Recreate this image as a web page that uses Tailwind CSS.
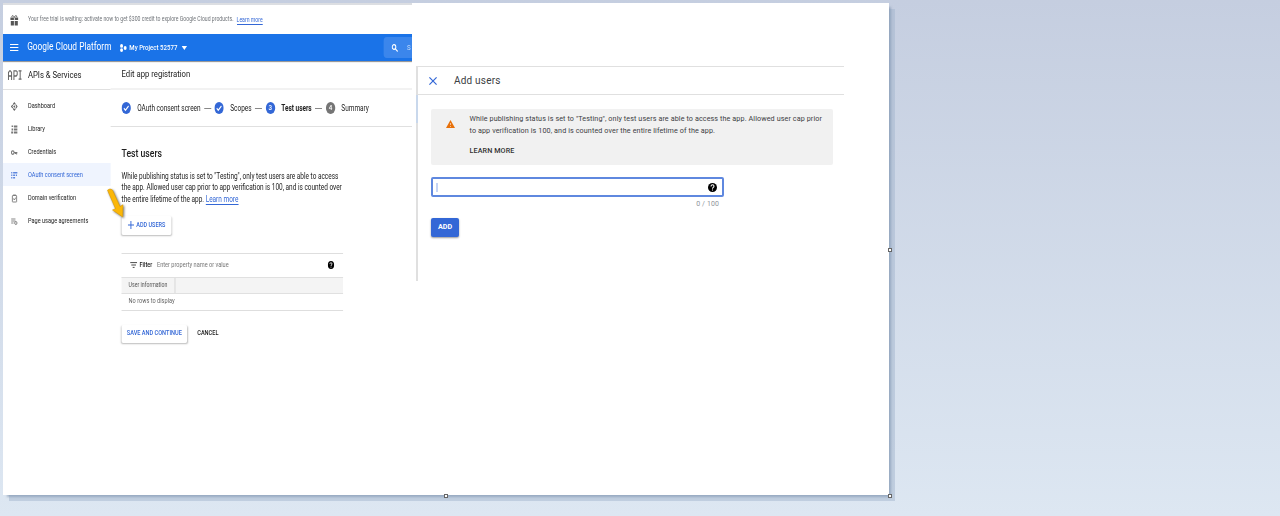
<!DOCTYPE html>
<html lang="en">
<head>
    <meta charset="UTF-8">
    <meta name="viewport" content="width=device-width, initial-scale=1.0">
    <title>OAuth consent screen - Test users</title>
    <script src="https://cdn.jsdelivr.net/npm/@tailwindcss/browser@4"></script>
</head>
<body class="h-[516px] overflow-hidden bg-linear-to-b from-[#c5cee0] to-[#dde7f2] pt-[3px] pl-[3px] font-['Roboto',sans-serif] text-[#3c4043]">
    <div class="relative w-[886px] h-[492px] bg-white flex gap-1 shadow-[3px_3px_2px_-1px_#7f93ad99,6px_6px_0_0_#a3b5ce80]">

        <!-- console page, horizontally condensed -->
        <div class="w-[409px] h-full shrink-0 overflow-hidden">
            <div class="w-[525px] origin-top-left scale-x-[.78] whitespace-nowrap">
                <div class="h-[31px] border-t-2 border-[#dcdee2] flex items-center pt-px pl-[9px] text-[6.6px] text-[#6f7378]">
                    <svg class="w-[11px] h-[11px] mr-3" viewBox="0 0 22 22" fill="#555"><path d="M1 5h9v5H1zM12 5h9v5h-9zM2 12h8v9H2zM12 12h8v9h-8z"/><path d="M11 5C9 0 4 0 5 4M11 5c2-5 7-5 6-1" fill="none" stroke="#555" stroke-width="2"/></svg>
                    <span>Your free trial is waiting: activate now to get $300 credit to explore Google Cloud products.</span>
                    <a class="ml-1 text-[#3367d6] border-b border-[#3367d6] leading-[8px]">Learn more</a>
                </div>
                <div class="h-[27px] bg-[#1a73e8] text-white flex items-center pl-[9px] shadow-[0_1px_1px_#0006]">
                    <svg class="w-[11px] h-[9px] mr-[11px]" viewBox="0 0 11 9" stroke="#fff" stroke-width="1.2"><path d="M0 1.5h11M0 4.5h11M0 7.5h11"/></svg>
                    <span class="w-[119px] text-[10.7px]">Google Cloud Platform</span>
                    <svg class="w-[9px] h-2 mr-[3px]" viewBox="0 0 9 8" fill="#fff"><circle cx="2" cy="1.9" r="1.9"/><circle cx="2" cy="6.1" r="1.9"/><circle cx="6.6" cy="4" r="1.9"/></svg>
                    <span class="text-[7.8px] font-medium">My Project 52577</span>
                    <svg class="w-[7px] h-1 ml-[5px]" viewBox="0 0 7 4" fill="#fff"><path d="M0 0h7L3.500 4z"/></svg>
                    <div class="ml-auto w-[37px] h-[21px] rounded-l bg-[#3b86ec] flex items-center pl-2.5 text-[8px] text-[#c5dcfa]">
                        <svg class="w-[9px] h-2 shrink-0 mr-[11px]" viewBox="0 0 9 8" fill="none" stroke="#fff" stroke-width="1.3"><circle cx="3.300" cy="3" r="2.300"/><path d="M5 4.700L8 7.500"/></svg>
                        <span>S</span>
                    </div>
                </div>

                <div class="flex">
                    <nav class="w-[138px] shrink-0 text-[7.2px] text-[#212121]">
                        <div class="h-[29px] mb-1 border-b border-[#e0e0e0] flex items-center pl-1.5 text-[9.9px]">
                            <svg class="w-[18px] h-[10px] mr-2" viewBox="0 0 18 10" fill="none" stroke="#666" stroke-width="1.3"><path d="M1 10V2.500l1.500-1.700h1l1.500 1.700V10M1 6h4M8 10V.8h3l1.200 1v3L11 6H8M14 .8h4M14 9.200h4M16 1v8"/></svg>
                            APIs &amp; Services
                        </div>
                        <div class="h-[23px] flex items-center gap-3 pl-2.5 pt-px">
                            <svg class="w-[9px] h-[9px] mr-px" viewBox="0 0 18 18" fill="none" stroke="#666" stroke-width="2.500"><path d="M6 5l3-3 3 3M6 13l3 3 3-3M5 6L2 9l3 3M13 6l3 3-3 3"/><circle cx="9" cy="9" r="1"/></svg>
                            Dashboard
                        </div>
                        <div class="h-[23px] flex items-center gap-3 pl-2.5 pt-px">
                            <svg class="w-[9px] h-[9px] mr-px" viewBox="0 0 18 18" fill="#777"><path d="M2 1h4v3H2zM8 1h9v3H8zM8 5h9v2H8zM2 7h4v4H2zM8 8h9v3H8zM1 13h5v4H1zM8 13h9v4H8z"/></svg>
                            Library
                        </div>
                        <div class="h-[23px] flex items-center gap-3 pl-2.5 pt-px">
                            <svg class="w-[9px] h-[9px] mr-px" viewBox="0 0 18 18" fill="none" stroke="#777" stroke-width="2.500"><circle cx="5" cy="9" r="3.500"/><path d="M8 9h9M15 9v4M12 9v3"/></svg>
                            Credentials
                        </div>
                        <div class="h-[23px] flex items-center gap-3 pl-2.5 pt-px bg-[#eff4fe] text-[#3367d6]">
                            <svg class="w-[9px] h-[9px] mr-px" viewBox="0 0 18 18" fill="#5c85dd"><path d="M1 2h3v3H1zM6 2h11v3H6zM1 7h3v3H1zM6 7h5v3H6zM13 7h3v3h-3zM1 12h3v3H1zM6 12h5v3H6z"/></svg>
                            OAuth consent screen
                        </div>
                        <div class="h-[23px] flex items-center gap-3 pl-2.5 pt-px">
                            <svg class="w-[9px] h-[9px] mr-px" viewBox="0 0 18 18" fill="none" stroke="#777" stroke-width="2"><rect x="4" y="3" width="11" height="13" rx="1"/><path d="M6 2h7M7 9l2 3 4-5"/></svg>
                            Domain verification
                        </div>
                        <div class="h-[23px] flex items-center gap-3 pl-2.5 pt-px">
                            <svg class="w-[9px] h-[9px] mr-px" viewBox="0 0 18 18" fill="none" stroke="#777" stroke-width="2"><path d="M1 4h11M1 8h11M1 12h6"/><circle cx="13" cy="12" r="3"/></svg>
                            Page usage agreements
                        </div>
                    </nav>

                    <main class="flex-1 text-[8.3px] text-[#212121]">
                        <div class="h-[29px] border-b-2 border-[#f2f2f2] flex items-center pl-[14px] text-[9.9px]">Edit app registration</div>
                        <div class="h-[37px] border-b border-[#e0e0e0] flex items-center pl-[14px]">
                            <svg class="w-3 h-3 mr-2" viewBox="0 0 12 12"><circle cx="6" cy="6" r="6" fill="#3367d6"/><path d="M3 6.200l2 2 4-4.200" fill="none" stroke="#fff" stroke-width="1.300"/></svg>
                            <span>OAuth consent screen</span>
                            <span class="w-[9px] h-px mx-[4.500px] bg-[#888]"></span>
                            <svg class="w-3 h-3 mr-2" viewBox="0 0 12 12"><circle cx="6" cy="6" r="6" fill="#3367d6"/><path d="M3 6.200l2 2 4-4.200" fill="none" stroke="#fff" stroke-width="1.300"/></svg>
                            <span>Scopes</span>
                            <span class="w-[9px] h-px mx-[4.500px] bg-[#888]"></span>
                            <span class="w-3 h-3 mr-2 rounded-full bg-[#3367d6] text-white text-[8px] font-medium flex items-center justify-center">3</span>
                            <span class="font-bold">Test users</span>
                            <span class="w-[9px] h-px mx-[4.500px] bg-[#888]"></span>
                            <span class="w-3 h-3 mr-2 rounded-full bg-[#757575] text-white text-[8px] font-medium flex items-center justify-center">4</span>
                            <span>Summary</span>
                        </div>
                        <div class="w-[298px] pl-[14px] pt-5">
                            <h1 class="text-[11.1px] leading-[14px] font-medium">Test users</h1>
                            <p class="mt-[10px] leading-[11.3px]">While publishing status is set to "Testing", only test users are able to access<br>the app. Allowed user cap prior to app verification is 100, and is counted over<br>the entire lifetime of the app. <a class="text-[#3367d6] border-b border-[#3367d6]">Learn more</a></p>
                            <button class="mt-[11px] w-[64px] h-[19px] rounded-xs shadow-[0_1px_2px_#0004] flex items-center justify-center gap-[3px] text-[7.1px] font-medium text-[#3367d6]">
                                <svg class="w-2 h-2" viewBox="0 0 8 8" stroke="#3367d6" stroke-width="1.200"><path d="M4 0v8M0 4h8"/></svg>
                                ADD USERS
                            </button>
                            <div class="mt-[18px] text-[7.2px] border-t border-[#dedede]">
                                <div class="h-[23px] flex items-center pl-[11px] pr-[11px]">
                                    <svg class="w-[9px] h-[6px] mr-[3px]" viewBox="0 0 9 6" stroke="#333" stroke-width="1"><path d="M0 .6h9M1.500 3h6M3.300 5.400h2.400"/></svg>
                                    <span class="font-medium">Filter</span>
                                    <span class="ml-[6px] text-[#757575]">Enter property name or value</span>
                                    <svg class="ml-auto w-[9px] h-2" viewBox="0 0 8 8"><circle cx="4" cy="4" r="4"/><path d="M2.700 3.100C2.700 1 5.400 1.200 5.300 3 5.200 3.900 4 3.900 4 5M4 5.700v.9" fill="none" stroke="#fff" stroke-width=".9"/></svg>
                                </div>
                                <div class="h-[17px] bg-[#f4f4f4] border-y border-[#e0e0e0] flex text-[6.7px] text-[#555]">
                                    <span class="w-[69px] pl-[9px] border-r border-[#d0d0d0] flex items-center">User information</span>
                                </div>
                                <div class="h-[17px] border-b border-[#dedede] flex items-center pl-[9px] text-[#666]">No rows to display</div>
                            </div>
                            <div class="mt-[14px] flex items-center gap-[13px] text-[7.2px] font-medium">
                                <button class="w-[84px] h-[18px] rounded-xs shadow-[0_1px_2px_#0004] text-[#3367d6]">SAVE AND CONTINUE</button>
                                <span>CANCEL</span>
                            </div>
                        </div>
                    </main>
                </div>
            </div>
        </div>

        <!-- add users panel -->
        <section class="mt-[63px] w-[428px] h-[215px] border-t border-l-2 border-[#e0e0e0] whitespace-nowrap">
            <div class="h-[28px] border-b border-[#e0e0e0] flex items-center pl-[11px]">
                <svg class="w-2 h-2 mr-[17px]" viewBox="0 0 8 8" stroke="#3367d6" stroke-width="1.200"><path d="M.4.4l7.200 7.200M7.600.4L.4 7.600"/></svg>
                <span class="text-[10px] tracking-[.2px]">Add users</span>
            </div>
            <div class="mt-[14px] ml-[13px] w-[402px] h-[56px] rounded-xs bg-[#f1f1f1] flex pl-[15px] pt-1">
                <svg class="w-[9px] h-2 mt-[7px] mr-[14.500px]" viewBox="0 0 18 16"><path d="M9 0l9 16H0z" fill="#e8710a"/><path d="M9 6v4M9 12v2" stroke="#fbd9bd" stroke-width="1.500"/></svg>
                <div class="text-[7.2px] leading-[12px] tracking-[.1px]">
                    <p>While publishing status is set to "Testing", only test users are able to access the app. Allowed user cap prior<br>to app verification is 100, and is counted over the entire lifetime of the app.</p>
                    <p class="mt-[7.500px] font-medium text-[#333]">LEARN MORE</p>
                </div>
            </div>
            <div class="mt-[12px] ml-[13px] w-[293px] h-[20px] rounded-xs border-2 border-[#5f88df] flex items-center pl-[3px] pr-[5px]">
                <span class="w-[2px] h-[9px] bg-[#c5d4f5]"></span>
                <svg class="ml-auto w-[9px] h-[9px]" viewBox="0 0 8 8"><circle cx="4" cy="4" r="4"/><path d="M2.700 3.100C2.700 1 5.400 1.200 5.300 3 5.200 3.900 4 3.900 4 5M4 5.700v.9" fill="none" stroke="#fff" stroke-width=".9"/></svg>
            </div>
            <div class="ml-[13px] w-[288px] h-[13px] mt-px text-right text-[7px] leading-[12px] tracking-[.1px] text-[#8e9398]">0 / 100</div>
            <button class="mt-[7px] ml-[13px] w-[28px] h-[19px] rounded-xs bg-[#3367d6] shadow-[0_1px_2px_#0006] text-white text-[7.2px] font-bold flex items-center justify-center">ADD</button>
        </section>

        <div class="absolute left-[413px] top-[92px] w-[2px] h-[28px] bg-[#c9d8ec]"></div>

        <!-- arrow callout -->
        <svg class="absolute left-[102px] top-[184px] w-[22px] h-[32px] drop-shadow-[1px_1px_1px_#0008]" viewBox="0 0 22 32"><path d="M2.500 3.200Q5 .8 7.500 3L15 19.500l3-1.800-.3 12.300L7.500 23l3-1.300z" fill="#fbb707" stroke="#d99a08" stroke-width=".6"/></svg>

        <!-- canvas resize handles -->
        <span class="absolute left-[885px] top-[245px] w-1 h-1 border border-[#666] bg-white"></span>
        <span class="absolute left-[441px] top-[491px] w-1 h-1 border border-[#666] bg-white"></span>
        <span class="absolute left-[885px] top-[491px] w-1 h-1 border border-[#666] bg-white"></span>
    </div>
</body>
</html>
